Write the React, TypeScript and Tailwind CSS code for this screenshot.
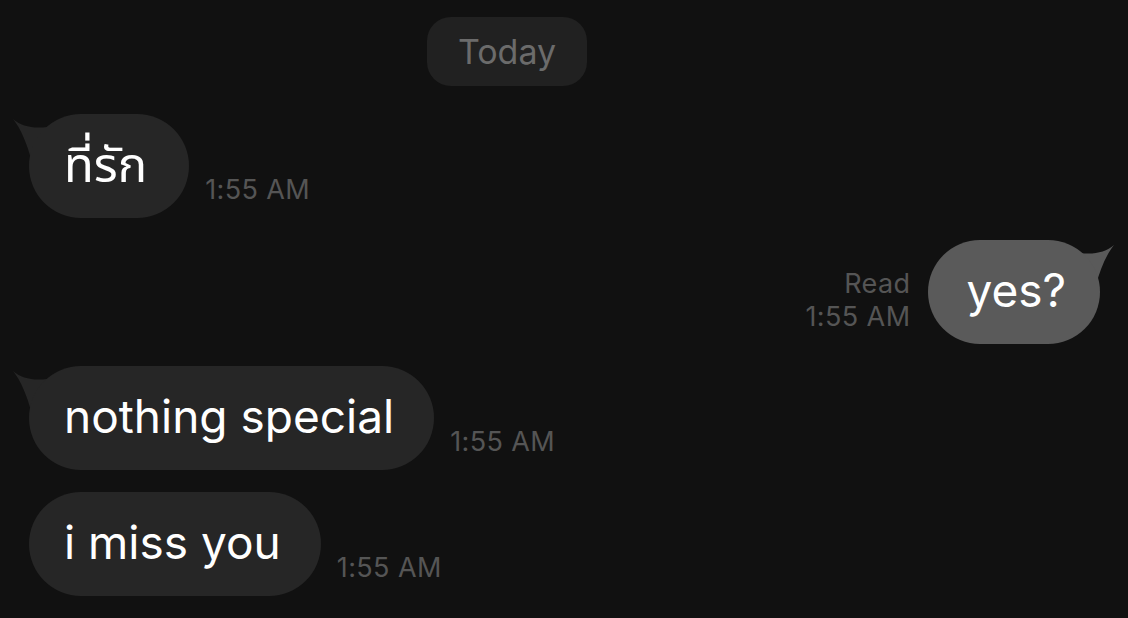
import React from "react";

const font = { fontFamily: "Inter, 'Noto Sans', 'Noto Sans Thai', 'DejaVu Sans', sans-serif" };

function TailLeft({ color }: { color: string }) {
  return (
    <svg
      className="absolute left-[-18px] top-0 overflow-visible"
      width="60"
      height="60"
      viewBox="0 0 60 60"
    >
      <path
        d="M2 5 C 10 12, 22 15, 36 13 L 50 40 L 20 45 C 16 30, 10 15, 2 5 Z"
        fill={color}
      />
    </svg>
  );
}

function TailRight({ color }: { color: string }) {
  return (
    <svg
      className="absolute right-[-16px] top-0 overflow-visible"
      width="60"
      height="60"
      viewBox="0 0 60 60"
    >
      <path
        d="M58 5 C 50 12, 38 15, 24 13 L 10 40 L 40 45 C 44 30, 50 15, 58 5 Z"
        fill={color}
      />
    </svg>
  );
}

function Incoming({ text, tail, thai }: { text: string; tail: boolean; thai?: boolean }) {
  return (
    <div className="flex items-end pl-[29px]">
      <div className="relative">
        {tail && <TailLeft color="#262626" />}
        <div
          className={
            thai
              ? "relative flex h-[104px] items-center rounded-[52px] bg-[#262626] pb-[4px] pl-[35px] pr-[42px] text-[49px] leading-none text-white"
              : "relative flex h-[104px] items-center rounded-[52px] bg-[#262626] pb-[4px] pl-[35px] pr-[40px] text-[46px] leading-none text-white"
          }
        >
          {text}
        </div>
      </div>
      <div className="mb-[15px] ml-[16px] text-[27px] leading-[26px] tracking-[0.4px] text-[#555555]">1:55 AM</div>
    </div>
  );
}

export default function App() {
  return (
    <div className="h-[618px] w-[1128px] overflow-hidden bg-[#111111]" style={font}>
      <div className="flex pl-[427px] pt-[17px]">
        <div className="flex h-[69px] w-[160px] items-center justify-center rounded-[24px] bg-[#212121] text-[34px] leading-none text-[#6b6b6b]">
          Today
        </div>
      </div>
      <div className="mt-[28px] flex flex-col gap-[22px]">
        <Incoming text="ที่รัก" tail thai />
        <div className="flex items-end justify-end pr-[28px]">
          <div className="mb-[11px] mr-[18px] text-right text-[27px] leading-[33px] tracking-[0.4px] text-[#555555]">
            <div>Read</div>
            <div>1:55 AM</div>
          </div>
          <div className="relative">
            <TailRight color="#5a5a5a" />
            <div className="relative flex h-[104px] items-center rounded-[52px] bg-[#5a5a5a] pb-[4px] pl-[38px] pr-[34px] text-[46px] leading-none text-white">
              yes?
            </div>
          </div>
        </div>
        <Incoming text="nothing special" tail />
        <Incoming text="i miss you" tail={false} />
      </div>
    </div>
  );
}
